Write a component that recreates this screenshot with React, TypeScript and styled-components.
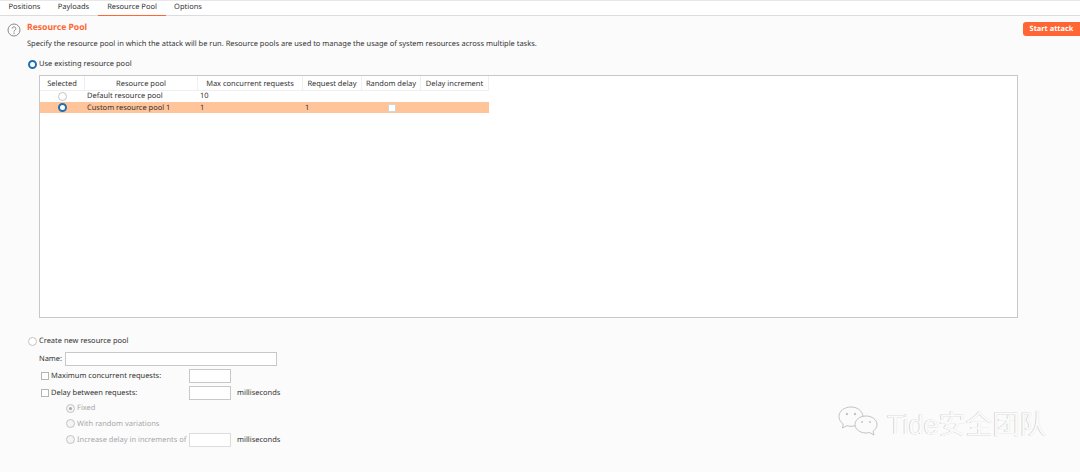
import React from "react";
import styled, { createGlobalStyle } from "styled-components";

const Global = createGlobalStyle`
  html, body { margin: 0; padding: 0; background: #fbfbfb; }
  body { font-family: "Noto Sans", "Noto Sans CJK SC", sans-serif; font-size: 7.47px; color: #333; text-rendering: geometricPrecision; white-space: nowrap; }
  #root { width: 1080px; height: 472px; overflow: hidden; }
`;

const Page = styled.div`
  position: relative;
  width: 1080px;
  height: 472px;
  overflow: hidden;
  background: #fbfbfb;
`;

const TabBar = styled.div`
  display: flex;
  height: 14px;
  background: #fff;
  border-top: 1px solid #e8e8e8;
  border-bottom: 1px solid #dcdcdc;
`;

const Tab = styled.div<{ $active?: boolean; $w: number }>`
  width: ${(p) => p.$w}px;
  height: 15px;
  box-sizing: border-box;
  text-align: center;
  line-height: 13px;
  color: #333;
  border-bottom: ${(p) => (p.$active ? "1px solid #ff6633" : "none")};
`;

const Body = styled.div`
  display: flex;
  padding: 6px 0 0 7px;
`;

const HelpIcon = styled.svg`
  width: 14px;
  height: 14px;
  flex: none;
  margin-right: 6px;
  margin-top: 1px;
`;

const Main = styled.div`
  flex: 1;
  display: flex;
  flex-direction: column;
`;

const HeadRow = styled.div`
  display: flex;
  justify-content: space-between;
  align-items: flex-start;
  height: 14px;
`;

const Title = styled.div`
  color: #ff6633;
  font-weight: 700;
  font-size: 8.6px;
  line-height: 11px;
`;

const StartButton = styled.div`
  width: 57px;
  height: 14px;
  background: #ff6633;
  color: #fff;
  font-weight: 700;
  font-size: 7.4px;
  line-height: 14px;
  text-align: center;
  border-radius: 3px 0 0 3px;
`;

const Description = styled.div`
  line-height: 12px;
  margin-top: 2px;
`;

const RadioRow = styled.label<{ $first?: boolean }>`
  display: flex;
  align-items: center;
  gap: 2px;
  height: 12px;
  margin-left: 1px;
  margin-top: ${(p) => (p.$first ? 8 : 0)}px;
  color: #333;
`;

const Radio = styled.span<{ $on?: boolean; $disabled?: boolean }>`
  box-sizing: border-box;
  flex: none;
  width: 9px;
  height: 9px;
  border-radius: 50%;
  background: ${(p) => (p.$disabled ? "#f4f4f4" : "#fff")};
  border: ${(p) =>
    p.$on && !p.$disabled ? "2.5px solid #1f6fb2" : "1px solid #c4c4c4"};
  display: flex;
  align-items: center;
  justify-content: center;
  &::after {
    content: "";
    display: ${(p) => (p.$on && p.$disabled ? "block" : "none")};
    width: 3px;
    height: 3px;
    border-radius: 50%;
    background: #a8a8a8;
  }
`;

const TableBox = styled.div`
  width: 979px;
  height: 243px;
  box-sizing: border-box;
  margin: 5px 0 0 12px;
  background: #fff;
  border: 1px solid #c8c8c8;
`;

const columns = "45px 113px 105px 59px 59px 68px";

const Head = styled.div`
  display: grid;
  grid-template-columns: ${columns};
  width: 449px;
  height: 14px;
  background: #fff;
`;

const HeadCell = styled.div`
  box-sizing: border-box;
  text-align: center;
  line-height: 12px;
  padding-top: 2px;
  border-right: 1px solid #efefef;
  border-bottom: 1px solid #efefef;
`;

const Row = styled.div<{ $selected?: boolean }>`
  display: grid;
  grid-template-columns: ${columns};
  width: 449px;
  height: 11.5px;
  line-height: 9.5px;
  background: ${(p) => (p.$selected ? "#ffc499" : "#fff")};
`;

const Cell = styled.div<{ $center?: boolean; $pad?: number }>`
  box-sizing: border-box;
  height: 11.5px;
  display: flex;
  align-items: center;
  justify-content: ${(p) => (p.$center ? "center" : "flex-start")};
  padding-left: ${(p) => p.$pad ?? 2}px;
  padding-top: ${(p) => (p.$center ? 1 : 2)}px;
`;

const TableCheck = styled.span`
  box-sizing: border-box;
  width: 8px;
  height: 8px;
  background: #fff;
  border: 1px solid #d4d4d4;
  border-radius: 1px;
`;

const Form = styled.div`
  display: flex;
  flex-direction: column;
  margin-top: 17px;
`;

const FieldRow = styled.div<{ $indent: number; $gap?: number }>`
  display: flex;
  align-items: center;
  height: 15px;
  margin-top: ${(p) => p.$gap ?? 2}px;
  margin-left: ${(p) => p.$indent}px;
  color: #333;
`;

const Input = styled.span<{ $w: number; $disabled?: boolean }>`
  box-sizing: border-box;
  display: block;
  flex: none;
  width: ${(p) => p.$w}px;
  height: 14px;
  background: #fff;
  border: 1px solid ${(p) => (p.$disabled ? "#dcdcdc" : "#c8c8c8")};
`;

const Check = styled.span`
  box-sizing: border-box;
  flex: none;
  width: 8px;
  height: 8px;
  margin-right: 2px;
  background: #fff;
  border: 1px solid #b4b4b4;
`;

const FieldLabel = styled.span<{ $w?: number }>`
  display: block;
  flex: none;
  width: ${(p) => (p.$w ? `${p.$w}px` : "auto")};
`;

const Unit = styled.span<{ $ml: number }>`
  margin-left: ${(p) => p.$ml}px;
  color: #333;
`;

const OptionRow = styled.div<{ $h: number }>`
  display: flex;
  align-items: center;
  gap: 2px;
  height: ${(p) => p.$h}px;
  margin-left: 39px;
  color: #a8a8a8;
`;

const Watermark = styled.div`
  position: absolute;
  left: 836px;
  top: 404px;
  display: flex;
  align-items: center;
  gap: 7px;
`;

const WatermarkText = styled.span`
  font-family: "Liberation Sans", "Noto Sans CJK SC", sans-serif;
  font-size: 27px;
  line-height: 42px;
  color: #fbfbfb;
  text-shadow: -0.4px -0.4px 0 #bcbcbc, 0.4px 0.4px 0 #efefef;
`;

const tabs: [string, number][] = [
  ["Positions", 49],
  ["Payloads", 49],
  ["Resource Pool", 68],
  ["Options", 44],
];

const App: React.FC = () => (
  <Page>
    <Global />
    <TabBar>
      {tabs.map(([t, w]) => (
        <Tab key={t} $w={w} $active={t === "Resource Pool"}>
          {t}
        </Tab>
      ))}
    </TabBar>
    <Body>
      <HelpIcon viewBox="0 0 14 14">
        <circle cx="7" cy="7" r="6" fill="none" stroke="#8a8a8a" strokeWidth="1" />
        <path d="M5.200 5.600a1.800 1.800 0 1 1 2.800 1.500c-.7.500-1 .8-1 1.500" fill="none" stroke="#8a8a8a" strokeWidth="1" />
        <circle cx="7" cy="10.300" r=".7" fill="#8a8a8a" />
      </HelpIcon>
      <Main>
        <HeadRow>
          <Title>Resource Pool</Title>
          <StartButton>Start attack</StartButton>
        </HeadRow>
        <Description>
          Specify the resource pool in which the attack will be run. Resource pools are used to manage the usage of system resources across multiple tasks.
        </Description>
        <RadioRow $first>
          <Radio $on />
          Use existing resource pool
        </RadioRow>
        <TableBox>
          <Head>
            {["Selected", "Resource pool", "Max concurrent requests", "Request delay", "Random delay", "Delay increment"].map((h) => (
              <HeadCell key={h}>{h}</HeadCell>
            ))}
          </Head>
          <Row>
            <Cell $center $pad={0}><Radio /></Cell>
            <Cell>Default resource pool</Cell>
            <Cell>10</Cell>
            <Cell />
            <Cell />
            <Cell />
          </Row>
          <Row $selected>
            <Cell $center $pad={0}><Radio $on /></Cell>
            <Cell>Custom resource pool 1</Cell>
            <Cell>1</Cell>
            <Cell>1</Cell>
            <Cell $center $pad={0}><TableCheck /></Cell>
            <Cell />
          </Row>
        </TableBox>
        <Form>
          <RadioRow>
            <Radio />
            Create new resource pool
          </RadioRow>
          <FieldRow $indent={12} $gap={4}>
            <FieldLabel $w={26}>Name:</FieldLabel>
            <Input $w={212} />
          </FieldRow>
          <FieldRow $indent={14}>
            <Check />
            <FieldLabel $w={138}>Maximum concurrent requests:</FieldLabel>
            <Input $w={42} />
          </FieldRow>
          <FieldRow $indent={14}>
            <Check />
            <FieldLabel $w={138}>Delay between requests:</FieldLabel>
            <Input $w={42} />
            <Unit $ml={6}>milliseconds</Unit>
          </FieldRow>
          <OptionRow $h={16}>
            <Radio $on $disabled />
            Fixed
          </OptionRow>
          <OptionRow $h={15}>
            <Radio $disabled />
            With random variations
          </OptionRow>
          <OptionRow $h={17}>
            <Radio $disabled />
            <FieldLabel $w={110}>Increase delay in increments of</FieldLabel>
            <Input $w={42} $disabled />
            <Unit $ml={4}>milliseconds</Unit>
          </OptionRow>
        </Form>
      </Main>
    </Body>
    <Watermark>
      <svg width="44" height="42" viewBox="0 0 44 42">
        <g fill="#fbfbfb" stroke="#b4b4b4" strokeWidth="0.8">
          <path d="M15 3c-6.500 0-12 4-12 9.500 0 3 1.600 5.600 4.200 7.400L6.500 24l4.300-2.300c1.300.4 2.800.6 4.200.6 6.500 0 12-4 12-9.500S21.500 3 15 3z" />
          <path d="M30 12c-6 0-11 3.700-11 8.500S24 29 30 29c1.200 0 2.300-.2 3.400-.5L38 31l-1-3.700c2.400-1.600 4-4 4-6.800 0-4.800-5-8.500-11-8.500z" />
        </g>
        <g fill="#c4c4c4">
          <circle cx="11" cy="10" r="1.200" />
          <circle cx="19" cy="10" r="1.200" />
          <circle cx="26" cy="18" r="1" />
          <circle cx="34" cy="18" r="1" />
        </g>
      </svg>
      <WatermarkText>Tide安全团队</WatermarkText>
    </Watermark>
  </Page>
);

export default App;
